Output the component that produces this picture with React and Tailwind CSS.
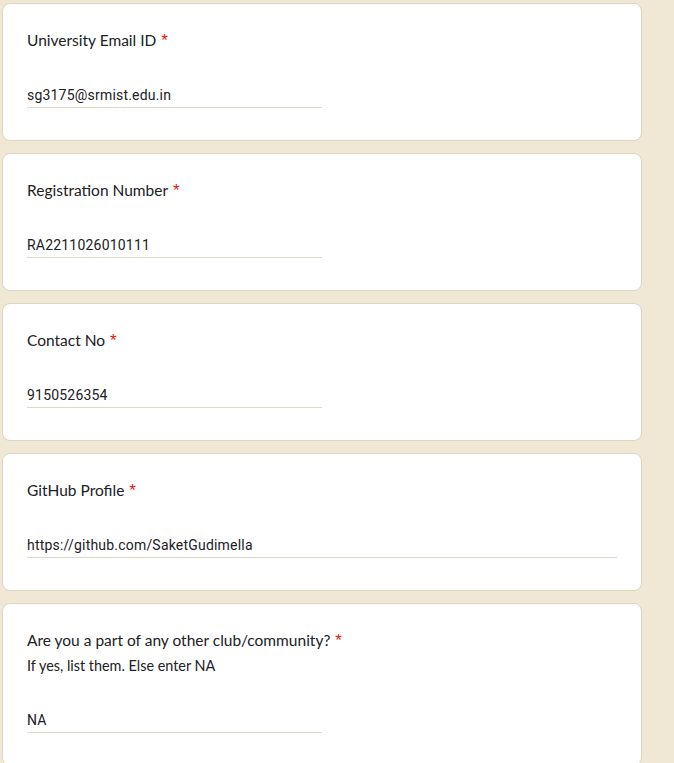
import React from 'react';

const questions = [
    { title: 'University Email ID', answer: 'sg3175@srmist.edu.in' },
    { title: 'Registration Number', answer: 'RA2211026010111' },
    { title: 'Contact No', answer: '9150526354' },
    { title: 'GitHub Profile', answer: 'https://github.com/SaketGudimella', wide: true },
    {
        title: 'Are you a part of any other club/community?',
        description: 'If yes, list them. Else enter NA',
        answer: 'NA',
    },
];

const QuestionCard = ({ title, description, answer, wide }) => (
    <div className="bg-white border border-[#dad6c2] rounded-lg px-6 pt-6 pb-8 min-h-[138px] shrink-0">
        <div className="h-6 text-[15.5px] leading-6 text-[#202124] font-['Lato',sans-serif]">
            {title}
            <span className="text-[#e3170f] ml-[5px] text-[17px] leading-none font-['Liberation_Sans',sans-serif]">*</span>
        </div>
        {description && (
            <div className="mt-1 text-[14.4px] leading-5 text-[#202124] font-['Lato',sans-serif]">
                {description}
            </div>
        )}
        <div
            className={`${description ? 'mt-8' : 'mt-[31px]'} ${wide ? 'w-full' : 'w-1/2'} border-b border-[#dcd9c6] text-[14px] leading-6 tracking-[0.2px] text-[#202124] font-['Roboto',sans-serif]`}
        >
            {answer}
        </div>
    </div>
);

const App = () => {
    return (
        <div className="h-screen overflow-hidden bg-[#f0e7d5] pt-[3px] pl-[2px]">
            <div className="w-[640px] flex flex-col gap-3">
                {questions.map((q) => (
                    <QuestionCard key={q.title} {...q} />
                ))}
            </div>
        </div>
    );
};

export default App;
